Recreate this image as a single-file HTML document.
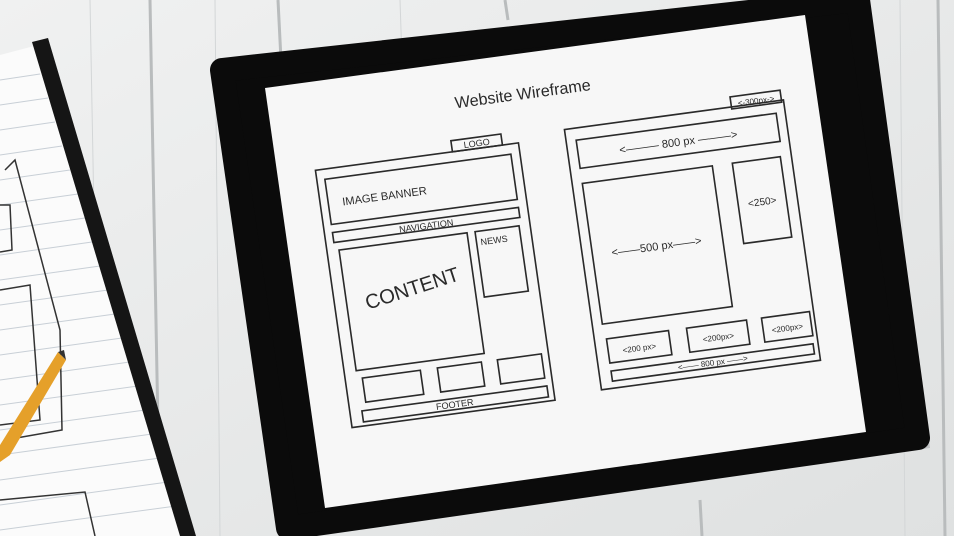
<!DOCTYPE html>
<html><head><meta charset="utf-8"><style>
html,body{margin:0;padding:0;width:954px;height:536px;overflow:hidden;background:#e9eaea}
svg{display:block}
text{font-family:"Liberation Sans",sans-serif;fill:#2a2a2a}
</style></head><body>
<svg width="954" height="536" viewBox="0 0 954 536">
<defs>
<linearGradient id="wood" x1="0" x2="1" y1="0" y2="1">
<stop offset="0" stop-color="#f0f1f1"/><stop offset="1" stop-color="#dfe1e1"/></linearGradient>
</defs>
<rect width="954" height="536" fill="url(#wood)"/>
<!-- plank gaps -->
<g stroke="#b9bcbd" stroke-width="3">
<line x1="150" y1="0" x2="160" y2="536"/>
<line x1="278" y1="0" x2="282" y2="80"/>
<line x1="505" y1="0" x2="508" y2="20"/>
<line x1="938" y1="0" x2="945" y2="536"/>
<line x1="700" y1="500" x2="702" y2="536"/>
</g>
<g stroke="#d3d6d7" stroke-width="1">
<line x1="90" y1="0" x2="100" y2="536"/><line x1="215" y1="0" x2="220" y2="536"/>
<line x1="400" y1="0" x2="402" y2="60"/><line x1="900" y1="0" x2="905" y2="536"/>
</g>
<!-- notebook -->
<polygon points="0,55 38,45 188,536 0,536" fill="#fbfbfb"/>
<g stroke="#c8cfd6" stroke-width="1">
<line x1="0" y1="80" x2="40" y2="74"/><line x1="0" y1="105" x2="48" y2="98"/>
<line x1="0" y1="130" x2="55" y2="122"/><line x1="0" y1="155" x2="62" y2="146"/>
<line x1="0" y1="180" x2="70" y2="170"/><line x1="0" y1="205" x2="78" y2="194"/>
<line x1="0" y1="230" x2="85" y2="218"/><line x1="0" y1="255" x2="92" y2="242"/>
<line x1="0" y1="280" x2="100" y2="266"/><line x1="0" y1="305" x2="108" y2="290"/>
<line x1="0" y1="330" x2="115" y2="314"/><line x1="0" y1="355" x2="122" y2="338"/>
<line x1="0" y1="380" x2="130" y2="362"/><line x1="0" y1="405" x2="138" y2="386"/>
<line x1="0" y1="430" x2="145" y2="410"/><line x1="0" y1="455" x2="152" y2="434"/>
<line x1="0" y1="480" x2="160" y2="458"/><line x1="0" y1="505" x2="168" y2="482"/>
<line x1="0" y1="530" x2="176" y2="506"/>
</g>
<g stroke="#333" stroke-width="1.5" fill="none">
<path d="M5,170 L15,160 L60,330 L62,430 L5,440"/>
<path d="M0,205 L10,205 L12,250 L0,252"/>
<path d="M0,290 L30,285 L40,420 L0,425"/>
<path d="M0,500 L85,492 L95,536"/>
</g>
<polygon points="32,42 48,38 196,536 180,536" fill="#151515"/>
<!-- pencil -->
<polygon points="58,352 66,360 10,455 0,462 0,445" fill="#e5a02a"/>
<polygon points="58,352 66,360 64,350" fill="#333"/>
<!-- tablet shadow -->
<polygon points="230,80 870,8 930,448 295,536" fill="#9a9c9d" opacity="0.45"/>
<!-- tablet -->
<polygon points="222,70 858,0 918,438 288,528" fill="#0b0b0b" stroke="#0b0b0b" stroke-width="24" stroke-linejoin="round"/>
<polygon points="265,88 805,15 866,432 325,508" fill="#f7f7f7"/>
<!-- wireframe -->
<g transform="matrix(1,-0.135,0.143,1.005,265,88)" stroke="#2a2a2a" stroke-width="1.6" fill="none">
<text x="252" y="45" font-size="16" text-anchor="middle" stroke="none" font-family="Liberation Serif">Website Wireframe</text>
<!-- left -->
<rect x="38" y="87" width="203" height="256"/>
<rect x="175" y="76" width="50" height="11"/>
<text x="200" y="85" font-size="9" stroke="none" text-anchor="middle">LOGO</text>
<rect x="46" y="97" width="186" height="45"/>
<text x="60" y="125" font-size="11" stroke="none">IMAGE BANNER</text>
<rect x="46" y="150" width="186" height="10"/>
<text x="139" y="159" font-size="9" stroke="none" text-anchor="middle">NAVIGATION</text>
<rect x="50" y="168" width="128" height="120"/>
<text x="70" y="230" font-size="20" stroke="none" transform="rotate(-10 70 230)">CONTENT</text>
<rect x="186" y="168" width="44" height="65"/>
<text x="190" y="182" font-size="9" stroke="none">NEWS</text>
<rect x="55" y="296" width="58" height="24"/><rect x="130" y="296" width="44" height="24"/><rect x="190" y="296" width="44" height="24"/>
<rect x="50" y="328" width="185" height="11"/>
<text x="142" y="337" font-size="9" stroke="none" text-anchor="middle">FOOTER</text>
<!-- right -->
<rect x="288" y="80" width="219" height="259"/>
<rect x="455" y="70" width="50" height="12"/>
<text x="480" y="80" font-size="8" stroke="none" text-anchor="middle">&lt;-300px-&gt;</text>
<rect x="298" y="92" width="200" height="28"/>
<text x="398" y="111" font-size="11" stroke="none" text-anchor="middle">&lt;——— 800 px ———&gt;</text>
<rect x="298" y="135" width="130" height="140"/>
<text x="362" y="210" font-size="11" stroke="none" text-anchor="middle">&lt;——500 px——&gt;</text>
<rect x="448" y="135" width="48" height="80"/>
<text x="472" y="180" font-size="10" stroke="none" text-anchor="middle">&lt;250&gt;</text>
<rect x="300" y="290" width="62" height="24"/><rect x="380" y="290" width="60" height="24"/><rect x="455" y="290" width="48" height="24"/>
<text x="331" y="306" font-size="8" stroke="none" text-anchor="middle">&lt;200 px&gt;</text>
<text x="410" y="306" font-size="8" stroke="none" text-anchor="middle">&lt;200px&gt;</text>
<text x="479" y="306" font-size="8" stroke="none" text-anchor="middle">&lt;200px&gt;</text>
<rect x="300" y="322" width="202" height="10"/>
<text x="401" y="330" font-size="8" stroke="none" text-anchor="middle">&lt;—— 800 px ——&gt;</text>
</g>
</svg>
</body></html>
